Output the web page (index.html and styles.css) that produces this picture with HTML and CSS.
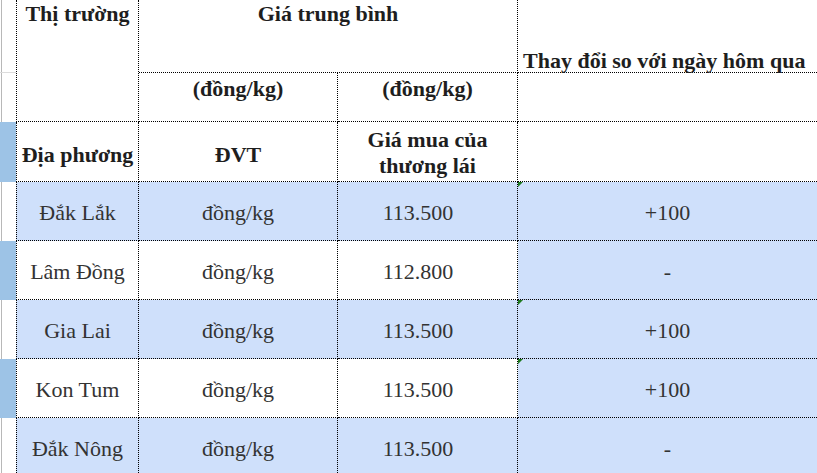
FILE: index.html
```html
<!DOCTYPE html>
<html lang="vi">
<head>
<meta charset="utf-8">
<title>Giá trung bình</title>
<link rel="stylesheet" href="styles.css">
</head>
<body>
<div class="sheet">
  <div class="g g-r1"></div>
  <div class="g g-r2"></div>
  <div class="g sel g-r3"></div>
  <div class="g g-r4"></div>
  <div class="g sel g-r5"></div>
  <div class="g g-r6"></div>
  <div class="g sel g-r7"></div>
  <div class="g g-r8"></div>

  <div class="c h first market">Thị trường</div>
  <div class="c h avg">Giá trung bình</div>
  <div class="c h change">Thay đổi so với ngày hôm qua</div>

  <div class="c h unit c2">(đồng/kg)</div>
  <div class="c h unit c3">(đồng/kg)</div>
  <div class="c last c4"></div>

  <div class="c h mid first">Địa phương</div>
  <div class="c h mid">ĐVT</div>
  <div class="c h mid two">Giá mua của<br>thương lái</div>
  <div class="c last"></div>

  <div class="c d blue first">Đắk Lắk</div>
  <div class="c d blue">đồng/kg</div>
  <div class="c d blue num">113.500</div>
  <div class="c d blue last"><span class="tri"></span>+100</div>

  <div class="c d first">Lâm Đồng</div>
  <div class="c d">đồng/kg</div>
  <div class="c d num">112.800</div>
  <div class="c d blue last">-</div>

  <div class="c d blue first">Gia Lai</div>
  <div class="c d blue">đồng/kg</div>
  <div class="c d blue num">113.500</div>
  <div class="c d blue last"><span class="tri"></span>+100</div>

  <div class="c d first">Kon Tum</div>
  <div class="c d">đồng/kg</div>
  <div class="c d num">113.500</div>
  <div class="c d blue last"><span class="tri"></span>+100</div>

  <div class="c d blue first">Đắk Nông</div>
  <div class="c d blue">đồng/kg</div>
  <div class="c d blue num">113.500</div>
  <div class="c d blue last">-</div>
</div>
</body>
</html>
```
FILE: styles.css
```css
html, body {
  margin: 0;
  padding: 0;
  background: #fff;
}
.sheet {
  width: 817px;
  height: 473px;
  overflow: hidden;
  display: grid;
  grid-template-columns: 16px 123px 199px 180px 299px;
  grid-template-rows: 73px 49px 60px 59px 59px 59px 59px 59px;
  font-family: "Liberation Serif", "Times New Roman", serif;
  font-size: 22px;
  line-height: 25px;
}
.g {
  grid-column: 1;
  background: linear-gradient(to right, #fff 1px, #b8b8b8 1px, #b8b8b8 2px, #fff 2px);
}
.g-r1 { grid-row: 1; border-bottom: 1px solid #dcdcdc; box-sizing: border-box; }
.g-r2 { grid-row: 2; }
.g-r3 { grid-row: 3; }
.g-r4 { grid-row: 4; }
.g-r5 { grid-row: 5; }
.g-r6 { grid-row: 6; }
.g-r7 { grid-row: 7; }
.g-r8 { grid-row: 8; }
.g.sel { background: #9dc3e6; }

.c {
  box-sizing: border-box;
  border-right: 1px dotted #000;
  border-bottom: 1px dotted #000;
  position: relative;
  text-align: center;
}
.c.first { border-left: 1px dotted #000; grid-column: 2; }
.c.last { border-right: none; }
.h {
  font-weight: bold;
  color: #1e1e1e;
}
.market {
  grid-row: 1 / span 2;
  padding-top: 1px;
}
.avg {
  grid-column: 3 / span 2;
  grid-row: 1;
  padding-top: 1px;
}
.change {
  grid-column: 5;
  grid-row: 1;
  border-right: none;
  text-align: left;
  padding-left: 5px;
  display: flex;
  align-items: flex-end;
  white-space: nowrap;
  line-height: 22px;
}
.unit { padding-top: 3px; }
.c2 { grid-column: 3; grid-row: 2; }
.c3 { grid-column: 4; grid-row: 2; }
.c4 { grid-column: 5; grid-row: 2; }
.mid {
  display: flex;
  align-items: center;
  justify-content: center;
  padding-top: 6px;
}
.mid.two {
  padding-top: 3px;
  line-height: 25.6px;
}
.d {
  display: flex;
  align-items: center;
  justify-content: center;
  color: #333;
  font-weight: normal;
  padding-top: 2px;
}
.num { padding-right: 19px; }
.blue { background: #cfe0fb; }
.tri {
  position: absolute;
  left: 0;
  top: 0;
  width: 0;
  height: 0;
  border-top: 5px solid #1f7a1f;
  border-right: 5px solid transparent;
}
```
